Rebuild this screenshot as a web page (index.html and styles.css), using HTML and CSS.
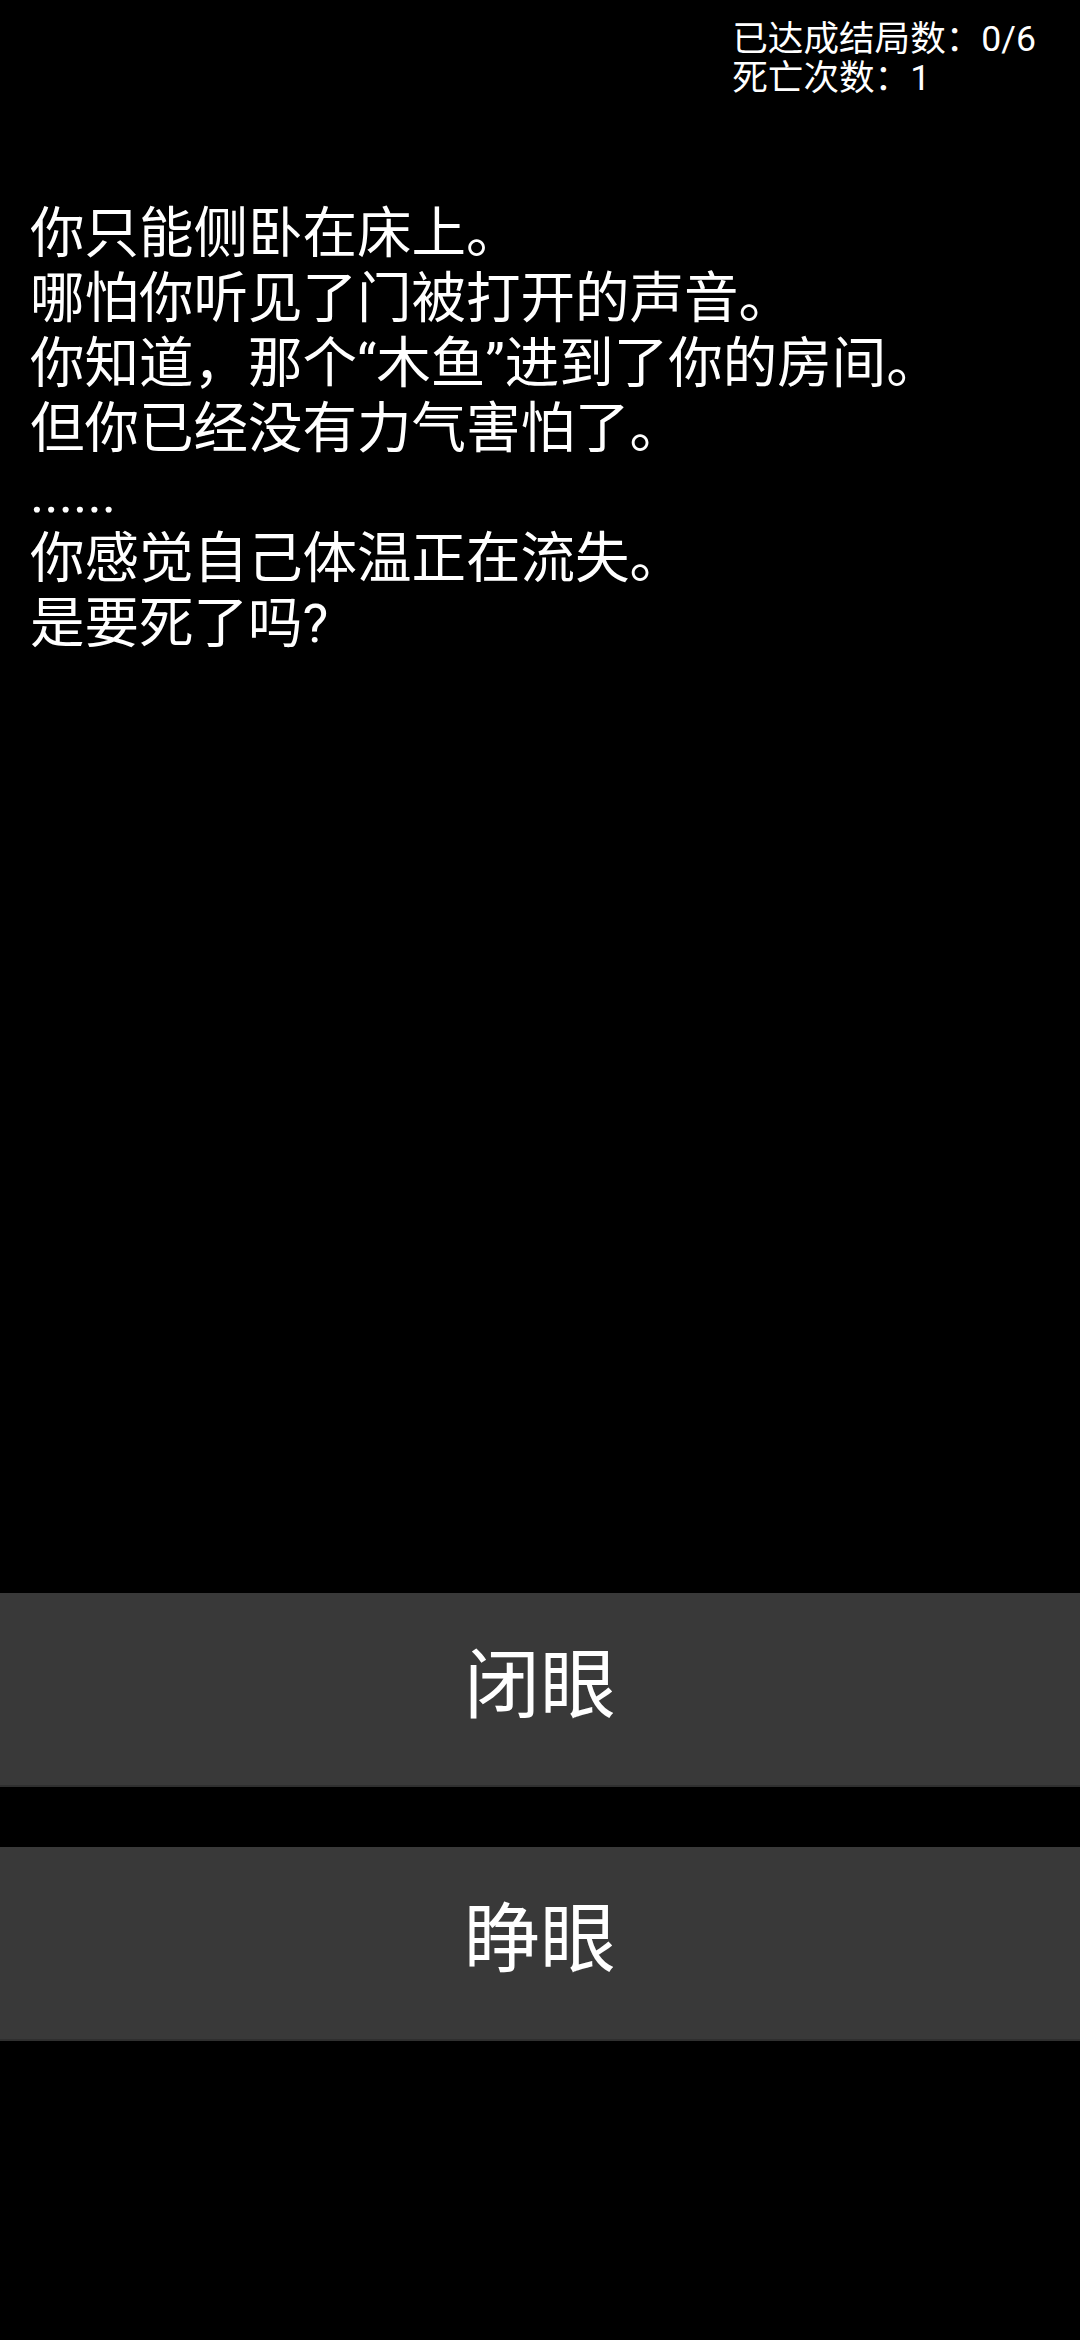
FILE: index.html
```html
<!DOCTYPE html>
<html lang="zh-CN">
<head>
<meta charset="utf-8">
<title>木鱼</title>
<link rel="stylesheet" href="styles.css">
</head>
<body>
<div class="page">
  <div class="stats">
    <div class="stat">已达成结局数：0/6</div>
    <div class="stat">死亡次数：1</div>
  </div>
  <div class="story">
    <p class="line">你只能侧卧在床上。</p>
    <p class="line">哪怕你听见了门被打开的声音。</p>
    <p class="line">你知道，那个“木鱼”进到了你的房间。</p>
    <p class="line">但你已经没有力气害怕了。</p>
    <p class="line">......</p>
    <p class="line">你感觉自己体温正在流失。</p>
    <p class="line">是要死了吗?</p>
  </div>
  <div class="choices">
    <div class="choice">闭眼</div>
    <div class="choice">睁眼</div>
  </div>
</div>
</body>
</html>
```

FILE: styles.css
```css
html, body {
  margin: 0;
  padding: 0;
  background: #000;
}
body {
  font-family: Roboto, "Noto Sans CJK SC", sans-serif;
  color: #fff;
}
.page {
  width: 1080px;
  min-height: 2340px;
  display: flex;
  flex-direction: column;
  box-sizing: border-box;
}
.stats {
  align-self: flex-end;
  padding: 20px 44px 0 0;
  font-size: 35.6px;
  line-height: 39px;
}
.story {
  flex: 1;
  margin-top: 103px;
  padding: 0 30px;
  font-size: 54.5px;
  line-height: 65px;
}
.line {
  margin: 0;
}
.choices {
  display: flex;
  flex-direction: column;
  gap: 60px;
  padding-bottom: 299px;
}
.choice {
  height: 194px;
  box-sizing: border-box;
  padding-bottom: 20px;
  background: #393939;
  border-bottom: 2px solid #2f2f2f;
  display: flex;
  align-items: center;
  justify-content: center;
  font-size: 76px;
  color: #fff;
}
```
